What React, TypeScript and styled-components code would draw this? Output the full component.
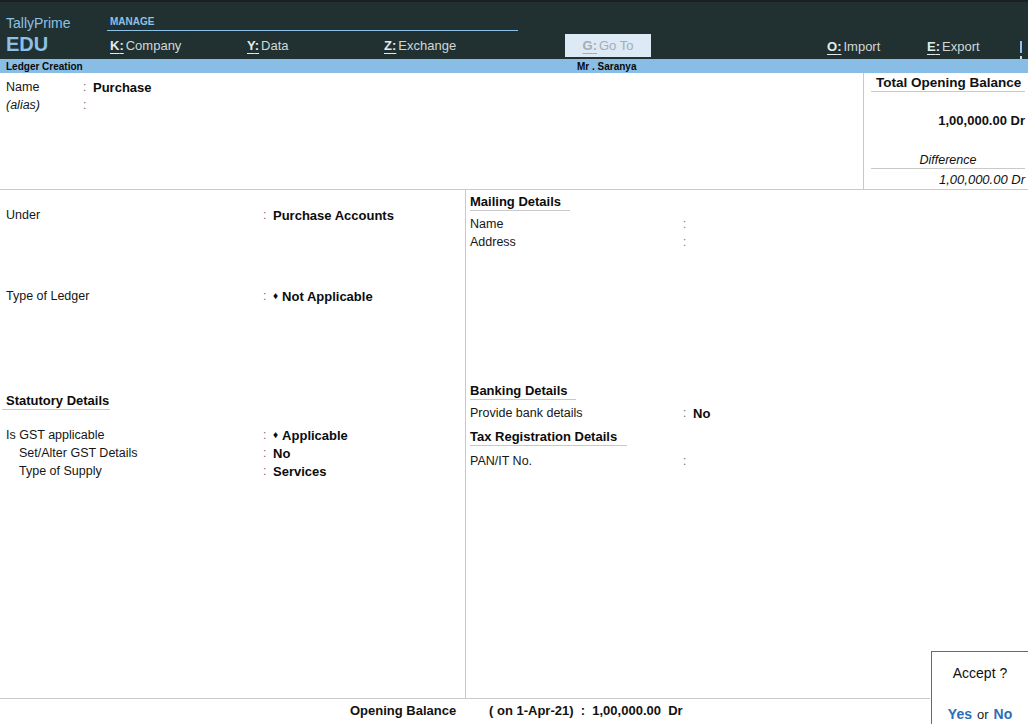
import React from "react";
import styled, { createGlobalStyle } from "styled-components";

const GlobalStyle = createGlobalStyle`
  html, body {
    margin: 0;
    padding: 0;
    background: #ffffff;
  }
  body {
    font-family: "Liberation Sans", Arial, sans-serif;
    font-size: 12px;
    color: #111;
  }
`;

const Page = styled.div`
  position: relative;
  width: 1028px;
  height: 724px;
  overflow: hidden;
  display: flex;
  flex-direction: column;
  background: #fff;
`;

/* ---------- top bar ---------- */

const TopBar = styled.div`
  height: 57px;
  border-top: 2px solid #1b1f1f;
  background: #213131;
  display: flex;
  flex-shrink: 0;
`;

const Brand = styled.div`
  width: 107px;
  padding: 13px 0 0 6px;
  box-sizing: border-box;
  color: #8cc1e8;
  display: flex;
  flex-direction: column;
`;

const BrandName = styled.div`
  font-size: 14px;
  line-height: 16px;
`;

const BrandEdu = styled.div`
  font-size: 20px;
  font-weight: 700;
  line-height: 22px;
  margin-top: 2px;
`;

const MenuGroup = styled.div`
  width: 411px;
  display: flex;
  flex-direction: column;
`;

const GroupLabel = styled.div`
  font-size: 10px;
  font-weight: 700;
  color: #8cc1e8;
  height: 29px;
  line-height: 12px;
  padding: 14px 0 0 3px;
  box-sizing: border-box;
  border-bottom: 1px solid #8cc1e8;
`;

const MenuRow = styled.div`
  display: flex;
  padding-left: 3px;
  margin-top: 7px;
`;

const MenuItem = styled.div<{ $w?: number; $disabled?: boolean }>`
  width: ${(p) => (p.$w ? `${p.$w}px` : "auto")};
  flex-shrink: 0;
  font-size: 13px;
  line-height: 15px;
  color: ${(p) => (p.$disabled ? "#a5adb3" : "#cfd8d8")};
  white-space: nowrap;
`;

const Key = styled.span<{ $disabled?: boolean }>`
  font-weight: 700;
  text-decoration: underline;
  text-underline-offset: 3px;
  color: ${(p) => (p.$disabled ? "#a5adb3" : "#e2ecec")};
  margin-right: 2px;
`;

const GoToWrap = styled.div`
  width: 309px;
  display: flex;
  flex-direction: column;
  padding: 32px 0 0 47px;
  box-sizing: border-box;
`;

const GoToButton = styled.div`
  width: 86px;
  height: 23px;
  background: #dde9f5;
  display: flex;
  align-items: center;
  justify-content: center;
`;

const RightMenu = styled.div`
  flex: 1;
  display: flex;
  overflow: hidden;
  padding-top: 37px;
`;

/* the next menu entry is cut by the window edge: only its first stroke shows */
const CutEntry = styled.div`
  width: 2px;
  height: 12px;
  margin-top: 2px;
  background: #8cc1e8;
  border-bottom: 3px solid #213131;
  box-shadow: 0 3px 0 0 #cfd8d8;
`;

/* ---------- title strip ---------- */

const TitleStrip = styled.div`
  height: 14px;
  background: #88bde6;
  display: flex;
  align-items: center;
  font-size: 10px;
  font-weight: 700;
  color: #0a0a0a;
  flex-shrink: 0;
`;

const StripLeft = styled.div`
  width: 577px;
  padding-left: 6px;
  box-sizing: border-box;
`;

/* ---------- header section ---------- */

const HeaderSection = styled.div`
  height: 116px;
  display: flex;
  border-bottom: 1px solid #c9c9c9;
  flex-shrink: 0;
`;

const HeaderFields = styled.div`
  flex: 1;
  padding: 5px 0 0 6px;
`;

const BalanceBox = styled.div`
  width: 165px;
  border-left: 1px solid #c9c9c9;
  padding: 2px 3px 0 7px;
  box-sizing: border-box;
  display: flex;
  flex-direction: column;
`;

const BoxTitle = styled.div`
  font-size: 13.5px;
  font-weight: 700;
  line-height: 15px;
  padding-left: 5px;
  padding-bottom: 1px;
  border-bottom: 1px solid #c9c9c9;
`;

const BoxAmount = styled.div<{ $italic?: boolean }>`
  text-align: right;
  font-size: 13px;
  line-height: 14px;
  font-weight: ${(p) => (p.$italic ? 400 : 700)};
  font-style: ${(p) => (p.$italic ? "italic" : "normal")};
  margin-top: ${(p) => (p.$italic ? "4px" : "22px")};
`;

const BoxLabel = styled.div`
  text-align: center;
  font-style: italic;
  font-size: 12.5px;
  line-height: 14px;
  margin-top: 25px;
  padding-bottom: 1px;
  border-bottom: 1px solid #c9c9c9;
`;

/* ---------- body ---------- */

const Body = styled.div`
  flex: 1;
  display: flex;
  min-height: 0;
`;

const LeftCol = styled.div`
  width: 466px;
  border-right: 1px solid #c9c9c9;
  padding: 16px 0 0 6px;
  box-sizing: border-box;
  display: flex;
  flex-direction: column;
`;

const RightCol = styled.div`
  flex: 1;
  padding: 3px 0 0 4px;
  display: flex;
  flex-direction: column;
`;

const Row = styled.div<{ $labelW: number; $indent?: number; $top?: number }>`
  display: flex;
  height: 18px;
  align-items: center;
  margin-top: ${(p) => p.$top ?? 0}px;
  padding-left: ${(p) => p.$indent ?? 0}px;

  & > span:first-child {
    width: ${(p) => p.$labelW - (p.$indent ?? 0)}px;
    flex-shrink: 0;
  }
`;

const Label = styled.span<{ $italic?: boolean }>`
  font-size: 12.5px;
  font-style: ${(p) => (p.$italic ? "italic" : "normal")};
  color: #161616;
`;

const Colon = styled.span<{ $empty?: boolean }>`
  color: ${(p) => (p.$empty ? "#b77812" : "#6e6e6e")};
  width: 10px;
  flex-shrink: 0;
`;

const Value = styled.span`
  font-weight: 700;
  font-size: 13px;
  color: #0c0c0c;
`;

const Diamond = styled.span`
  font-size: 10px;
  margin-right: 4px;
  position: relative;
  top: -2px;
`;

const SectionHead = styled.div<{ $top: number; $w: number; $pad?: number }>`
  margin-top: ${(p) => p.$top}px;
  margin-left: ${(p) => -(p.$pad ?? 0)}px;
  padding-left: ${(p) => p.$pad ?? 0}px;
  width: ${(p) => p.$w}px;
  height: 17px;
  line-height: 18px;
  font-size: 13px;
  font-weight: 700;
  color: #0c0c0c;
  border-bottom: 1px solid #c9c9c9;
  margin-bottom: 4px;
`;

/* ---------- footer ---------- */

const Footer = styled.div`
  height: 26px;
  border-top: 1px solid #c9c9c9;
  display: flex;
  align-items: center;
  font-family: "Liberation Sans", Arial, sans-serif;
  font-size: 13px;
  font-weight: 700;
  color: #121212;
  flex-shrink: 0;
  width: 930px;
  padding-bottom: 3px;
  box-sizing: border-box;
`;

const FooterLabel = styled.div`
  width: 139px;
  margin-left: 350px;
`;

const AcceptBox = styled.div`
  position: absolute;
  left: 931px;
  top: 651px;
  width: 97px;
  height: 73px;
  border: 1px solid #6a6a6a;
  border-right: none;
  border-bottom: none;
  background: #fff;
  display: flex;
  flex-direction: column;
  align-items: center;
  font-family: "Liberation Sans", Arial, sans-serif;
  font-size: 14px;
  box-sizing: border-box;
`;

const AcceptTitle = styled.div`
  margin-top: 13px;
  color: #111;
`;

const AcceptChoices = styled.div`
  margin-top: 25px;
  color: #222;
  font-size: 13px;
  display: flex;
  gap: 5px;
  align-items: baseline;
`;

const Choice = styled.span`
  color: #2e6db7;
  font-weight: 700;
  font-size: 14px;
`;

const Nav = ({ k, text, w, disabled }: { k: string; text: string; w?: number; disabled?: boolean }) => (
  <MenuItem $w={w} $disabled={disabled}>
    <Key $disabled={disabled}>{k}:</Key>
    {text}
  </MenuItem>
);

export default function App() {
  return (
    <Page>
      <GlobalStyle />
      <TopBar>
        <Brand>
          <BrandName>TallyPrime</BrandName>
          <BrandEdu>EDU</BrandEdu>
        </Brand>
        <MenuGroup>
          <GroupLabel>MANAGE</GroupLabel>
          <MenuRow>
            <Nav k="K" text="Company" w={137} />
            <Nav k="Y" text="Data" w={137} />
            <Nav k="Z" text="Exchange" />
          </MenuRow>
        </MenuGroup>
        <GoToWrap>
          <GoToButton>
            <Nav k="G" text="Go To" disabled />
          </GoToButton>
        </GoToWrap>
        <RightMenu>
          <Nav k="O" text="Import" w={100} />
          <Nav k="E" text="Export" w={93} />
          <CutEntry />
        </RightMenu>
      </TopBar>

      <TitleStrip>
        <StripLeft>Ledger Creation</StripLeft>
        <div>Mr . Saranya</div>
      </TitleStrip>

      <HeaderSection>
        <HeaderFields>
          <Row $labelW={77}>
            <Label>Name</Label>
            <Colon>:</Colon>
            <Value>Purchase</Value>
          </Row>
          <Row $labelW={77}>
            <Label $italic>(alias)</Label>
            <Colon>:</Colon>
          </Row>
        </HeaderFields>
        <BalanceBox>
          <BoxTitle>Total Opening Balance</BoxTitle>
          <BoxAmount>1,00,000.00 Dr</BoxAmount>
          <BoxLabel>Difference</BoxLabel>
          <BoxAmount $italic>1,00,000.00 Dr</BoxAmount>
        </BalanceBox>
      </HeaderSection>

      <Body>
        <LeftCol>
          <Row $labelW={257}>
            <Label>Under</Label>
            <Colon>:</Colon>
            <Value>Purchase Accounts</Value>
          </Row>
          <Row $labelW={257} $top={63}>
            <Label>Type of Ledger</Label>
            <Colon>:</Colon>
            <Value>
              <Diamond>♦</Diamond>Not Applicable
            </Value>
          </Row>
          <SectionHead $top={87} $w={104} $pad={4}>
            Statutory Details
          </SectionHead>
          <Row $labelW={257} $top={12}>
            <Label>Is GST applicable</Label>
            <Colon>:</Colon>
            <Value>
              <Diamond>♦</Diamond>Applicable
            </Value>
          </Row>
          <Row $labelW={257} $indent={13}>
            <Label>Set/Alter GST Details</Label>
            <Colon>:</Colon>
            <Value>No</Value>
          </Row>
          <Row $labelW={257} $indent={13}>
            <Label>Type of Supply</Label>
            <Colon>:</Colon>
            <Value>Services</Value>
          </Row>
        </LeftCol>

        <RightCol>
          <SectionHead $top={0} $w={100}>Mailing Details</SectionHead>
          <Row $labelW={213}>
            <Label>Name</Label>
            <Colon $empty>:</Colon>
          </Row>
          <Row $labelW={213}>
            <Label>Address</Label>
            <Colon $empty>:</Colon>
          </Row>
          <SectionHead $top={131} $w={106}>Banking Details</SectionHead>
          <Row $labelW={213}>
            <Label>Provide bank details</Label>
            <Colon>:</Colon>
            <Value>No</Value>
          </Row>
          <SectionHead $top={6} $w={157}>Tax Registration Details</SectionHead>
          <Row $labelW={213} $top={2}>
            <Label>PAN/IT No.</Label>
            <Colon>:</Colon>
          </Row>
        </RightCol>
      </Body>

      <Footer>
        <FooterLabel>Opening Balance</FooterLabel>
        <div>( on 1-Apr-21)&nbsp; :&nbsp; 1,00,000.00&nbsp; Dr</div>
      </Footer>

      <AcceptBox>
        <AcceptTitle>Accept ?</AcceptTitle>
        <AcceptChoices>
          <Choice>Yes</Choice>
          <span>or</span>
          <Choice>No</Choice>
        </AcceptChoices>
      </AcceptBox>
    </Page>
  );
}
